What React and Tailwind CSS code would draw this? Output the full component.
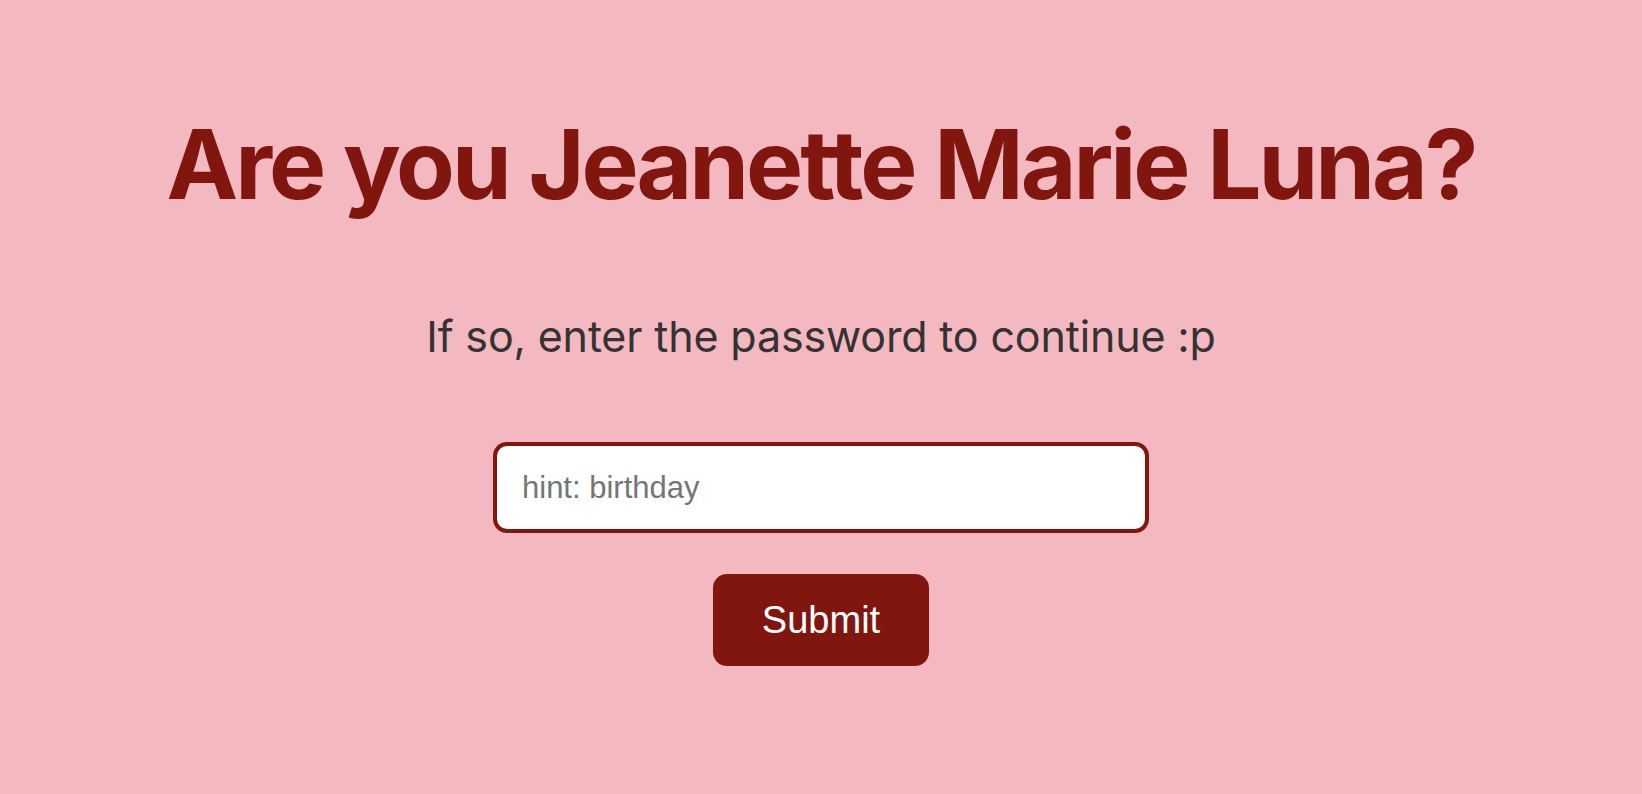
export default function App() {
  return (
    <div className="min-h-screen w-full bg-[#f4b8c1] flex flex-col items-center text-center">
      <h1 className="mt-[116px] text-[96px] leading-none font-bold tracking-[-3px] text-[#81160f] [font-family:Inter,'Noto_Sans',sans-serif] whitespace-nowrap">
        Are you Jeanette Marie Luna?
      </h1>
      <p className="mt-[103px] text-[43px] leading-none tracking-[-0.15px] text-[#333333] [font-family:Inter,'Noto_Sans',sans-serif] whitespace-nowrap">
        If so, enter the password to continue :p
      </p>
      <input
        type="password"
        placeholder="hint: birthday"
        className="mt-[84px] w-[656px] h-[91px] rounded-[14px] border-[4px] border-[#81160f] bg-white px-[25px] text-[31px] text-[#333] placeholder:text-[#757575] outline-none [font-family:'Liberation_Sans',Arial,sans-serif]"
      />
      <button className="mt-[41px] w-[216px] h-[92px] rounded-[14px] bg-[#81160f] text-white text-[38px] [font-family:'Liberation_Sans',Arial,sans-serif]">
        Submit
      </button>
    </div>
  );
}
